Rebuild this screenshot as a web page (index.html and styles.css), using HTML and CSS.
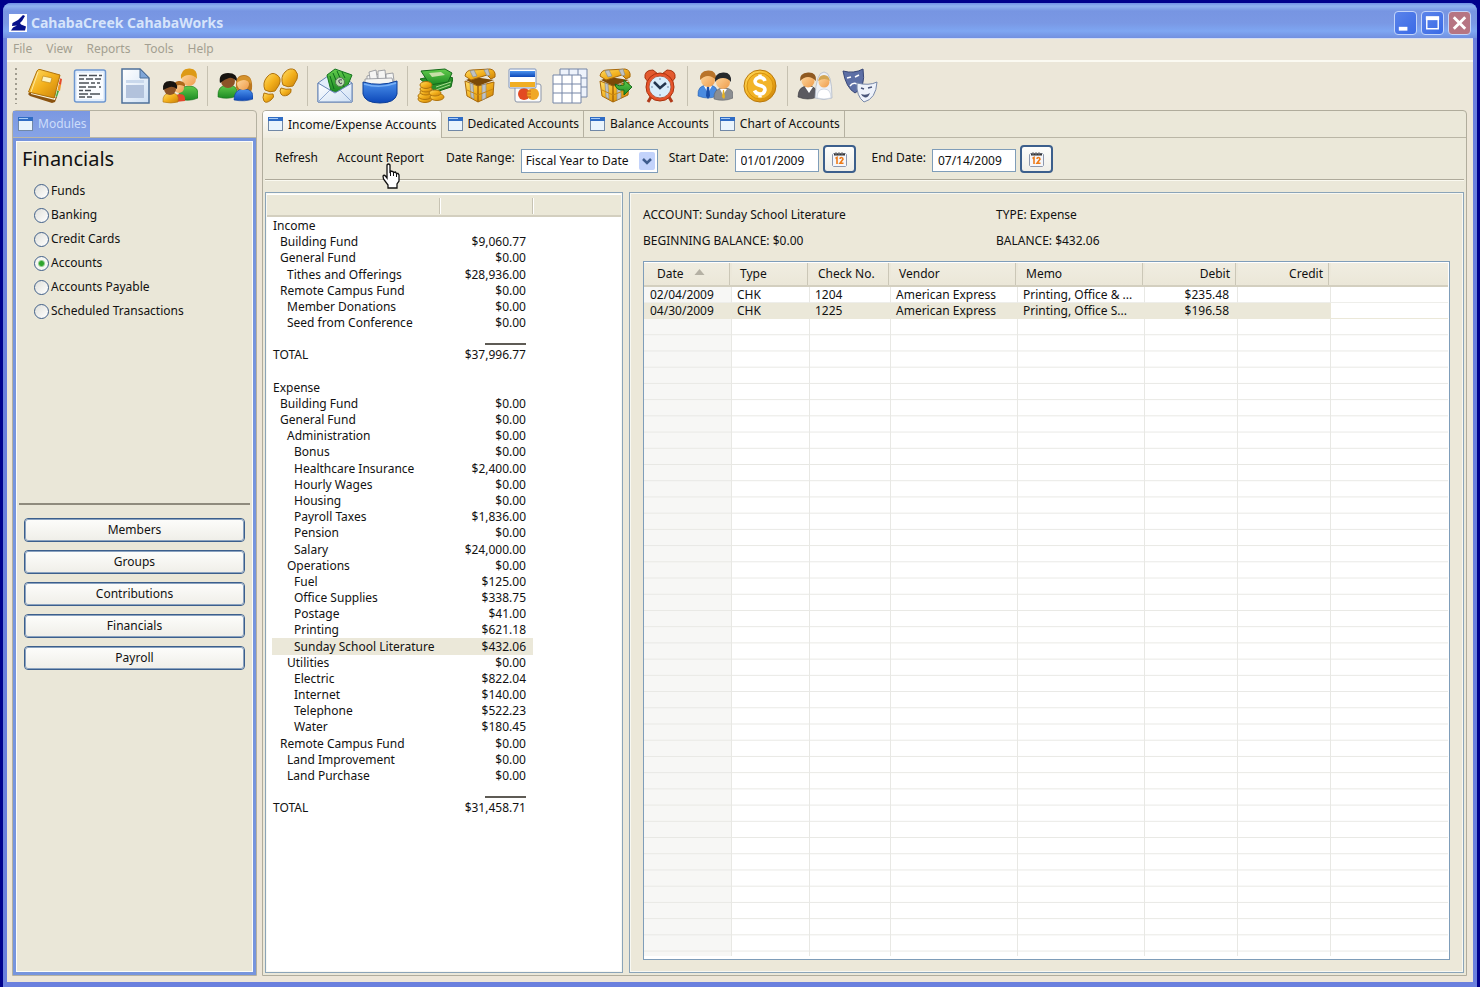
FILE: index.html
```html
<!DOCTYPE html>
<html lang="en">
<head>
<meta charset="utf-8">
<title>CahabaCreek CahabaWorks</title>
<link rel="stylesheet" href="styles.css">
</head>
<body>
<svg class="defs" aria-hidden="true">
  <defs>
    <linearGradient id="gold" x1="0" y1="0" x2="1" y2="1"><stop offset="0" stop-color="#ffdf6b"/><stop offset=".5" stop-color="#f3b01c"/><stop offset="1" stop-color="#c87f08"/></linearGradient>
    <linearGradient id="blue" x1="0" y1="0" x2="0" y2="1"><stop offset="0" stop-color="#4d93ee"/><stop offset="1" stop-color="#0c47b8"/></linearGradient>
    <linearGradient id="green" x1="0" y1="0" x2="0" y2="1"><stop offset="0" stop-color="#62cc4c"/><stop offset="1" stop-color="#1c8a23"/></linearGradient>
    <linearGradient id="skin" x1="0" y1="0" x2="1" y2="1"><stop offset="0" stop-color="#ffd9a0"/><stop offset="1" stop-color="#ee9b4a"/></linearGradient>
    <linearGradient id="paper" x1="0" y1="0" x2="1" y2="1"><stop offset="0" stop-color="#ffffff"/><stop offset="1" stop-color="#cfe0f4"/></linearGradient>
    <symbol id="app" viewBox="0 0 18 18"><path fill="#06108a" d="M14 1l2 1-3 5-2 2 1 1.500 5 2-1 4H2l2-3 4-2-5 .5.500-3L9 6z"/></symbol>
    <symbol id="win" viewBox="0 0 15 15"><rect x=".5" y=".5" width="14" height="13" fill="#e9f4fd" stroke="#7188a6"/><path fill="#2f6cc4" d="M0 0h15v4H0z"/><path fill="#a9cbf5" d="M1 1h9v1H1z"/></symbol>
    <symbol id="cal" viewBox="0 0 17 17"><path fill="#f4f6fb" stroke="#8d97ad" d="M1.500 3.500l1-1h12l1 1v11l-1 1h-12l-1-1z"/><path d="M3 3.500h11" stroke="#333" stroke-width="2"/><path d="M5 1v3M8 1v3M11 1v3" stroke="#777"/><path d="M4.500 7.500L6 6.500V13M9 8q0-1.500 1.500-1.500T12 8.200L9 12.300h3.500" fill="none" stroke="#ee7b18" stroke-width="1.600"/></symbol>
    <symbol id="chest" viewBox="0 0 36 36"><path fill="url(#gold)" stroke="#a8690b" d="M3 13l13 5v16L5 28zM16 18l16-4-1 13-15 7z"/><path fill="#7b4a08" d="M4 12l8-3 20 3-16 6z"/><path fill="url(#gold)" stroke="#a8690b" d="M3 8q1-6 7-6l18-1q6 1 5 8l-4 2-4-4-16 5z"/><path fill="#bfc2c4" stroke="#82868a" stroke-width=".6" d="M8 3l4-1 3 6-4 1zM22 2l4-1 2 6-3 1zM8 15l3 1 1 15-3-2zM20 17l4-1v14l-4 2z"/><path d="M5 22l11 5 15-6" fill="none" stroke="#c98712"/></symbol>

    <symbol id="i-book" viewBox="0 0 36 36"><path fill="#e44b2a" d="M32 10l3 1-1 6-3-1z"/><path fill="#f29a1f" d="M31 16l3 1-1 6-3-1z"/><path fill="#48a53a" d="M29 22l3 1-2 6-3-1z"/><path fill="#8a5310" d="M1 26l3-3 26 6-2 5-3 1L3 28z"/><path fill="#f8f3df" d="M4 24l24 6 4-20 1 1-5 21L4 26z"/><path fill="url(#gold)" stroke="#b0730d" d="M10 3q1-2 3-1.500L33 7 27 30 1.500 24z"/><path fill="#fdf3c4" stroke="#c28a1a" stroke-width=".7" d="M16 8l9 2-1.500 5-9-2z"/><path d="M11 4L4 24" stroke="#ffe9a1"/></symbol>
    <symbol id="i-list" viewBox="0 0 36 36"><rect x="2.500" y="2" width="31" height="32" rx="2" fill="#e3eefb" stroke="#6d96cf" stroke-width="1.500"/><rect x="5" y="5" width="26" height="26" fill="#fafcff"/><path d="M7 7.500h8M17 7.500h8M27 7.500h3M7 11h5M14 11h7M23 11h6M7 15h10M19 15h4M25 15h3M7 19h7M16 19h8M27 19h2M7 22.500h4M13 22.500h6M7 26h9M18 26h10M7 29h6M15 29h5" stroke="#4a4f57" stroke-width="1.500"/></symbol>
    <symbol id="i-doc" viewBox="0 0 36 36"><path fill="url(#paper)" stroke="#4e7099" stroke-width="1.500" d="M5 1h18l9 9v25H5z"/><path fill="#7fa6d8" stroke="#4e7099" d="M23 1v9h9z"/><path fill="#c9d8ec" d="M9 12h18v3H9z"/><path fill="#b2c2dc" d="M9 17h18v13H9z"/></symbol>
    <symbol id="i-family" viewBox="0 0 36 36"><path fill="url(#green)" stroke="#19701c" stroke-width=".6" d="M17 31q-1-13 10-13t9 12q-9 4-19 1z"/><circle cx="27" cy="11" r="7" fill="url(#skin)"/><path fill="#dd9a17" d="M19 11q-1-10 8-10.500T35 11q-3-4-8-4t-8 4z"/><path fill="#e2482c" d="M13 34q-1-8 5-8t5 7z"/><circle cx="17" cy="20" r="5" fill="url(#skin)"/><path fill="#b06a1c" d="M12 19q0-7 6-6t5 6q-5-4-11 0z"/><path fill="url(#gold)" stroke="#b0730d" stroke-width=".6" d="M1 34q-1-9 8-9t7 9q-7 2-15 0z"/><circle cx="8" cy="21" r="6" fill="#8c5327"/><path fill="#17130f" d="M1 22q-1-9 7-9t7 8q-4-3-7-2t-7 3z"/></symbol>
    <symbol id="i-couple" viewBox="0 0 36 36"><path fill="url(#green)" stroke="#19701c" stroke-width=".6" d="M1 29q-1-12 10-12t9 11q-9 4-19 1z"/><circle cx="11" cy="13" r="7" fill="#8c5327"/><path fill="#17130f" d="M3 15Q1 5 11 5t9 9q-4-5-8-4t-9 5z"/><path fill="#bb7820" d="M19 20q-1-13 8-13t8 14q-1 4-4 4h-9z"/><path fill="url(#blue)" stroke="#0d3e97" stroke-width=".6" d="M17 32q0-11 10-11t9 10q-8 3-19 1z"/><circle cx="26" cy="16" r="6" fill="url(#skin)"/><path fill="#d6932c" d="M19 15q2-8 9-7t6 8q-4-4-7-4t-8 3z"/></symbol>
    <symbol id="i-steps" viewBox="0 0 36 36"><g fill="url(#gold)" stroke="#b0730d"><path d="M3 22Q0 15 5 9t10-2q5 3 2 10l-4 6q-5 2-10-1z"/><path d="M2 25q5 2 9 1 2 3-2 6-5 4-7 1T2 25z"/><path d="M21 17q-3-8 2-13t10-2q4 4 2 9l-4 7q-5 2-10-1z"/><path d="M19 20q5 2 10 1 1 4-3 6-5 2-7-1t0-6z"/></g></symbol>
    <symbol id="i-mail" viewBox="0 0 36 36"><path fill="#e3edfa" stroke="#6684b5" d="M1 15L18 3l17 12v19H1z"/><path fill="url(#green)" stroke="#167420" d="M10 7l8-6 17 6-7 17-14-1z"/><path d="M13 8l4 13M16 5l5 12M20 3l7 16M25 4l3 6" stroke="#0f6a1c"/><circle cx="23" cy="14" r="4.500" fill="#bcd9b1" stroke="#557a54"/><path d="M25 12q-4-1-3 2t3 1" fill="none" stroke="#435"/><path fill="url(#paper)" stroke="#6684b5" d="M1 15l17 10 17-10v19H1z"/><path d="M1 34l12-12M35 34L23 22" stroke="#8fa9d2" fill="none"/></symbol>
    <symbol id="i-box" viewBox="0 0 36 36"><g fill="#f5f5f3" stroke="#8d8f95" stroke-width=".8"><path d="M5 8q10-4 26 1v10H5z"/><path d="M7 4l7-2 2 12-7 3zM16 3l7-1 1 11-8 2zM24 6l7-1 1 8-8 3z"/><path d="M3 11l27-1 2 8H3z"/></g><path fill="url(#blue)" stroke="#0d3f98" d="M1 14q17 5 34-1v13q-2 9-17 9T1 26z"/><path d="M2 16q16 5 32-1" fill="none" stroke="#79b0f5" stroke-width="1.500"/></symbol>
    <symbol id="i-cash" viewBox="0 0 36 36"><path fill="#2b8f2a" stroke="#156a1a" d="M3 11l22-5 11 4-2 9-15 5z"/><path fill="url(#green)" stroke="#156a1a" d="M4 3l24-2 7 4-4 9-18 3z"/><path fill="#c7dfa8" d="M12 5l12-1 4 3-13 2z"/><path d="M19 19l15-5M19 22l14-5" stroke="#a5d88d"/><g fill="url(#gold)" stroke="#b1740c"><ellipse cx="8" cy="31" rx="7" ry="3.500"/><ellipse cx="8" cy="28" rx="7" ry="3.500"/><ellipse cx="9" cy="24" rx="6" ry="3"/><ellipse cx="9" cy="21" rx="6" ry="3"/><ellipse cx="9" cy="17" rx="6" ry="3.500"/><ellipse cx="20" cy="29" rx="7" ry="3.500"/><ellipse cx="18" cy="25" rx="6" ry="3"/></g></symbol>
    <symbol id="i-cards" viewBox="0 0 36 36"><rect x="8" y="16" width="26" height="18" rx="2" fill="#fafafa" stroke="#8b95a8"/><circle cx="17" cy="26" r="6" fill="#e34a22"/><circle cx="26" cy="26" r="6" fill="#f0a726"/><path d="M19 23h5M19 26h5M19 29h5" stroke="#cf6418"/><rect x="2" y="1" width="27" height="19" rx="1" fill="#fff" stroke="#7c93bd"/><path fill="url(#blue)" d="M3 3h25v6H3z"/><path fill="#f0ae24" d="M3 14h25v5H3z"/></symbol>
    <symbol id="i-grid" viewBox="0 0 36 36"><path fill="#eef3fb" stroke="#7585a6" d="M8 1h27v28H8zM8 10h27M8 19h27M17 1v28M26 1v28"/><path fill="#fff" stroke="#7585a6" d="M1 7h28v28H1zM1 16h28M1 25h28M10 7v28M20 7v28"/></symbol>
    <symbol id="i-chest" viewBox="0 0 36 36"><use href="#chest"/></symbol>
    <symbol id="i-chestgo" viewBox="0 0 36 36"><use href="#chest"/><path fill="url(#green)" stroke="#156a1a" d="M18 16q4 3 9 1v-5l8 7-8 8v-5q-8 1-9-6z"/></symbol>
    <symbol id="i-clock" viewBox="0 0 36 36"><path d="M9 29l-3 5M27 29l3 5" stroke="#b03a1a" stroke-width="3"/><path fill="#e35a2f" stroke="#a8330f" d="M3 10q-1-8 8-8l5 4-9 9zM33 10q1-8-8-8l-5 4 9 9z"/><circle cx="18" cy="19" r="14" fill="#e9532a" stroke="#a8330f"/><circle cx="18" cy="19" r="11" fill="#d9edfb" stroke="#b65b3d"/><path d="M12 14l6 6 6-5" fill="none" stroke="#24364e" stroke-width="2.500"/><path d="M18 10v2M18 26v2M9 19h2M25 19h2" stroke="#6a87a8"/></symbol>
    <symbol id="i-business" viewBox="0 0 36 36"><path fill="#4a8be0" stroke="#265fae" stroke-width=".6" d="M1 28q-1-11 10-11t9 11q-9 4-19 0z"/><path fill="#fff" d="M7 18h8l-4 7z"/><path fill="#1b4fa8" d="M10 18h2l1 10-2 3-2-3z"/><circle cx="11" cy="12" r="7" fill="url(#skin)"/><path fill="#b9742a" d="M3 12Q2 3 11 2.500T19 12q-4-4-8-4t-8 4z"/><path fill="#8b8e92" stroke="#606366" stroke-width=".6" d="M17 31q-1-11 10-11t9 10q-9 4-19 1z"/><path fill="#fff" d="M23 21h7l-4 6z"/><path fill="#e6b223" d="M26 22h1l1 7-1 2-2-2z"/><circle cx="26" cy="14" r="7" fill="url(#skin)"/><path fill="#26292c" d="M18 14q-1-9 8-9.500T34 14q-3-4-8-4t-8 4z"/></symbol>
    <symbol id="i-coin" viewBox="0 0 36 36"><circle cx="18" cy="18" r="16" fill="url(#gold)" stroke="#b9780c"/><circle cx="18" cy="18" r="13" fill="#f2b429" stroke="#d7930f"/><path d="M23 13q-1-3.500-5-3.500t-5 3.500q0 3.500 5 4.500t5 4.500q-1 4-5 4t-5.500-3.500M18 6.500v4M18 26v3.500" fill="none" stroke="#fff" stroke-width="3.500"/></symbol>
    <symbol id="i-wedding" viewBox="0 0 36 36"><path fill="#5b5a60" stroke="#3d3c41" stroke-width=".6" d="M1 29q0-11 10-11t9 11q-9 4-19 0z"/><path fill="#fff" d="M8 19h8l-4 6z"/><circle cx="11" cy="13" r="6.500" fill="url(#skin)"/><path fill="#8f5a22" d="M3 13Q2 5 11 4.500T19 13q-4-4-8-4t-8 4z"/><path fill="#edf0f5" stroke="#a9b2c2" stroke-width=".7" d="M18 30Q19 4 27 4t8 26q-8 3-17 0z"/><circle cx="27" cy="14" r="5.500" fill="url(#skin)"/><path fill="#d3a552" d="M21 13q1-6 6-6t6 6q-5-4-12 0z"/><path fill="#fff" stroke="#b9c2d2" stroke-width=".6" d="M20 30q0-9 7-9t7 9q-7 2-14 0z"/></symbol>
    <symbol id="i-masks" viewBox="0 0 36 36"><path fill="#5d6fa5" stroke="#3a4877" d="M1 3q11 3 20-2 3 19-8 24Q4 20 1 3z"/><path d="M5 10l4-1M13 9l4-2M8 18q3-4 7-2" fill="none" stroke="#fff" stroke-width="1.500"/><path fill="#eef2fa" stroke="#7888a8" d="M15 15q12 3 20-1-1 17-13 20-8-6-7-19z"/><path d="M19 20l3 1M26 20l4-1" stroke="#4a567a" stroke-width="1.500"/><path d="M19 26q5 2 9-1-2 5-5 4.500-3-.5-4-3.500z" fill="#4a567a"/></symbol>
  </defs>
</svg>

<div class="window">
  <header class="titlebar">
    <span class="app-icon"><svg><use href="#app"/></svg></span>
    <h1 class="title">CahabaCreek CahabaWorks</h1>
    <div class="caption">
      <button class="cap" aria-label="Minimize"><svg viewBox="0 0 22 22"><path fill="#fff" d="M4 15h9v4H4z"/></svg></button>
      <button class="cap" aria-label="Maximize"><svg viewBox="0 0 22 22"><path fill="none" stroke="#fff" stroke-width="1.500" d="M5 5h12v12H5z"/><path fill="#fff" d="M4 4h14v4H4z"/></svg></button>
      <button class="cap close" aria-label="Close"><svg viewBox="0 0 22 22"><path stroke="#fff" stroke-width="3" d="M5 5l12 12M17 5L5 17"/></svg></button>
    </div>
  </header>

  <nav class="menubar" aria-label="Main menu">
    <button>File</button><button>View</button><button>Reports</button><button>Tools</button><button>Help</button>
  </nav>

  <div class="toolbar" role="toolbar" aria-label="Tools">
    <span class="grip"></span>
    <button aria-label="Directory"><svg><use href="#i-book"/></svg></button>
    <button aria-label="List"><svg><use href="#i-list"/></svg></button>
    <button aria-label="Document"><svg><use href="#i-doc"/></svg></button>
    <button aria-label="Families"><svg><use href="#i-family"/></svg></button>
    <span class="sep"></span>
    <button aria-label="Groups"><svg><use href="#i-couple"/></svg></button>
    <button aria-label="Visits"><svg><use href="#i-steps"/></svg></button>
    <span class="sep"></span>
    <button aria-label="Offerings"><svg><use href="#i-mail"/></svg></button>
    <button aria-label="Batches"><svg><use href="#i-box"/></svg></button>
    <span class="sep"></span>
    <button aria-label="Cash"><svg><use href="#i-cash"/></svg></button>
    <button aria-label="Funds"><svg><use href="#i-chest"/></svg></button>
    <button aria-label="Credit cards"><svg><use href="#i-cards"/></svg></button>
    <button aria-label="Ledger"><svg><use href="#i-grid"/></svg></button>
    <button aria-label="Transfer"><svg><use href="#i-chestgo"/></svg></button>
    <button aria-label="Scheduled"><svg><use href="#i-clock"/></svg></button>
    <span class="sep"></span>
    <button aria-label="Employees"><svg><use href="#i-business"/></svg></button>
    <button aria-label="Pay"><svg><use href="#i-coin"/></svg></button>
    <span class="sep"></span>
    <button aria-label="Weddings"><svg><use href="#i-wedding"/></svg></button>
    <button aria-label="Events"><svg><use href="#i-masks"/></svg></button>
  </div>

  <div class="workspace">
    <aside class="modules">
      <div class="tabs"><button class="module-tab"><svg><use href="#win"/></svg>Modules</button></div>
      <div class="module-body">
        <section class="choices">
          <h2>Financials</h2>
          <label><input type="radio" name="view">Funds</label>
          <label><input type="radio" name="view">Banking</label>
          <label><input type="radio" name="view">Credit Cards</label>
          <label><input type="radio" name="view" checked>Accounts</label>
          <label><input type="radio" name="view">Accounts Payable</label>
          <label><input type="radio" name="view">Scheduled Transactions</label>
        </section>
        <nav class="switcher" aria-label="Modules">
          <button>Members</button>
          <button>Groups</button>
          <button>Contributions</button>
          <button>Financials</button>
          <button>Payroll</button>
        </nav>
      </div>
    </aside>

    <main class="editor">
      <div class="tabs" role="tablist">
        <button class="tab active" role="tab" aria-selected="true"><svg><use href="#win"/></svg>Income/Expense Accounts</button>
        <button class="tab" role="tab"><svg><use href="#win"/></svg>Dedicated Accounts</button>
        <button class="tab" role="tab"><svg><use href="#win"/></svg>Balance Accounts</button>
        <button class="tab" role="tab"><svg><use href="#win"/></svg>Chart of Accounts</button>
      </div>

      <div class="filters">
        <button class="link">Refresh</button>
        <button class="link report">Account Report<svg class="pointer" viewBox="0 0 18 26"><path fill="#fff" stroke="#111" stroke-width="1.300" d="M5 2q1.500-2 3 0v7l1-1 2 .5.500 1 2-.5 1 1.500 1.500 0 1 1.500v6l-2 3v4H6v-3l-4.500-6-.5-3q1-1.500 2.500 0L5 15z"/><path d="M8.500 9v4M11.500 10v3M14.500 11v3" stroke="#111"/></svg></button>
        <div class="field range">
          <label for="range">Date Range:</label>
          <span class="combo"><select id="range"><option>Fiscal Year to Date</option></select><svg viewBox="0 0 16 18"><rect width="16" height="18" rx="2" fill="#c3d3fb"/><path d="M4 7l4 4 4-4" fill="none" stroke="#3f5c8e" stroke-width="2.500"/></svg></span>
        </div>
        <div class="field">
          <label for="start">Start Date:</label>
          <input id="start" type="text" value="01/01/2009">
          <button class="cal" aria-label="Pick start date"><svg><use href="#cal"/></svg></button>
        </div>
        <div class="field end">
          <label for="end">End Date:</label>
          <input id="end" type="text" value="07/14/2009">
          <button class="cal" aria-label="Pick end date"><svg><use href="#cal"/></svg></button>
        </div>
      </div>

      <div class="panes">
        <section class="pane tree-pane">
          <div class="tree-head"><span></span><span></span></div>
          <div class="tree-body">
          <table class="tree">
            <colgroup><col class="c-name"><col class="c-amount"></colgroup>
            <tbody>
            <tr><td>Income</td><td></td></tr>
            <tr><td class="l1">Building Fund</td><td>$9,060.77</td></tr>
            <tr><td class="l1">General Fund</td><td>$0.00</td></tr>
            <tr><td class="l2">Tithes and Offerings</td><td>$28,936.00</td></tr>
            <tr><td class="l1">Remote Campus Fund</td><td>$0.00</td></tr>
            <tr><td class="l2">Member Donations</td><td>$0.00</td></tr>
            <tr><td class="l2">Seed from Conference</td><td>$0.00</td></tr>
            <tr><td></td><td class="rule"></td></tr>
            <tr><td>TOTAL</td><td>$37,996.77</td></tr>
            <tr><td></td><td></td></tr>
            <tr><td>Expense</td><td></td></tr>
            <tr><td class="l1">Building Fund</td><td>$0.00</td></tr>
            <tr><td class="l1">General Fund</td><td>$0.00</td></tr>
            <tr><td class="l2">Administration</td><td>$0.00</td></tr>
            <tr><td class="l3">Bonus</td><td>$0.00</td></tr>
            <tr><td class="l3">Healthcare Insurance</td><td>$2,400.00</td></tr>
            <tr><td class="l3">Hourly Wages</td><td>$0.00</td></tr>
            <tr><td class="l3">Housing</td><td>$0.00</td></tr>
            <tr><td class="l3">Payroll Taxes</td><td>$1,836.00</td></tr>
            <tr><td class="l3">Pension</td><td>$0.00</td></tr>
            <tr><td class="l3">Salary</td><td>$24,000.00</td></tr>
            <tr><td class="l2">Operations</td><td>$0.00</td></tr>
            <tr><td class="l3">Fuel</td><td>$125.00</td></tr>
            <tr><td class="l3">Office Supplies</td><td>$338.75</td></tr>
            <tr><td class="l3">Postage</td><td>$41.00</td></tr>
            <tr><td class="l3">Printing</td><td>$621.18</td></tr>
            <tr class="selected"><td class="l3">Sunday School Literature</td><td>$432.06</td></tr>
            <tr><td class="l2">Utilities</td><td>$0.00</td></tr>
            <tr><td class="l3">Electric</td><td>$822.04</td></tr>
            <tr><td class="l3">Internet</td><td>$140.00</td></tr>
            <tr><td class="l3">Telephone</td><td>$522.23</td></tr>
            <tr><td class="l3">Water</td><td>$180.45</td></tr>
            <tr><td class="l1">Remote Campus Fund</td><td>$0.00</td></tr>
            <tr><td class="l2">Land Improvement</td><td>$0.00</td></tr>
            <tr><td class="l2">Land Purchase</td><td>$0.00</td></tr>
            <tr><td></td><td class="rule"></td></tr>
            <tr><td>TOTAL</td><td>$31,458.71</td></tr>
            </tbody>
          </table>
          </div>
        </section>

        <section class="pane detail">
          <div class="summary">
            <span>ACCOUNT: Sunday School Literature</span><span>TYPE: Expense</span>
            <span>BEGINNING BALANCE: $0.00</span><span>BALANCE: $432.06</span>
          </div>
          <div class="ledger-box">
            <table class="ledger">
              <colgroup><col class="w-date"><col class="w-type"><col class="w-check"><col class="w-text"><col class="w-text"><col class="w-money"><col class="w-money"><col></colgroup>
              <thead>
                <tr><th>Date <svg class="sort" viewBox="0 0 10 6"><path fill="#b5b1a4" d="M5 0l5 6H0z"/></svg></th><th>Type</th><th>Check No.</th><th>Vendor</th><th>Memo</th><th class="num">Debit</th><th class="num">Credit</th><th></th></tr>
              </thead>
              <tbody>
                <tr class="entry"><td>02/04/2009</td><td>CHK</td><td>1204</td><td>American Express</td><td>Printing, Office &amp; ...</td><td class="num">$235.48</td><td></td><td></td></tr>
                <tr class="entry selected"><td>04/30/2009</td><td>CHK</td><td>1225</td><td>American Express</td><td>Printing, Office S...</td><td class="num">$196.58</td><td></td><td></td></tr>
                <tr class="blank"><td></td><td></td><td></td><td></td><td></td><td></td><td></td><td></td></tr>
              </tbody>
            </table>
          </div>
        </section>
      </div>
    </main>
  </div>
</div>
</body>
</html>
```
FILE: styles.css
```css
* { box-sizing: border-box; }
html, body { height: 100%; }
body {
  margin: 0;
  padding: 3px 3px 0;
  background: #00018c;
  color: #111;
  font: 12px/16px "Noto Sans", "Open Sans", sans-serif;
  overflow: hidden;
}
button, input, select { font: inherit; color: inherit; margin: 0; }
button { padding: 0; border: 0; background: none; white-space: nowrap; }
svg { display: block; }
.defs { position: absolute; width: 0; height: 0; }

.window {
  display: flex;
  flex-direction: column;
  height: 100%;
  padding: 0 4px 5px;
  background: #6a80de;
  border-radius: 8px 8px 0 0;
}

.titlebar {
  display: flex;
  align-items: center;
  gap: 4px;
  height: 35px;
  flex: none;
  margin: 0 -4px;
  padding: 4px 6px 0;
  border-radius: 8px 8px 0 0;
  background: linear-gradient(#6f8fe4 0, #8fb4f0 3px, #7795e2 8px, #7a98e4 20px, #7ea6f2 28px, #7290e0 35px);
}
.app-icon { width: 18px; height: 18px; background: #fff; }
.app-icon svg { width: 18px; height: 18px; }
.title { flex: 1; margin: 0; font-size: 14px; line-height: 20px; color: #d6e4fb; }
.caption { display: flex; gap: 4px; }
.cap { width: 23px; height: 24px; border: 1px solid #c3d5fa; border-radius: 4px; background: linear-gradient(135deg, #5a83ea, #3a6ae6); }
.cap svg { width: 21px; height: 22px; }
.cap.close { background: #b67583; }

.menubar {
  display: flex;
  flex: none;
  gap: 14px;
  height: 24px;
  padding: 0 6px 2px;
  align-items: center;
  background: #ece7da;
  border-top: 1px solid #d5def3;
  border-bottom: 2px solid #fbfaf2;
  color: #a39f91;
}
.toolbar {
  display: flex;
  flex: none;
  align-items: center;
  gap: 9px;
  height: 48px;
  padding: 0 8px;
  background: #ece7d9;
}
.toolbar button, .toolbar svg { width: 36px; height: 36px; }
.grip { width: 3px; height: 36px; background: radial-gradient(circle at 1px 1px, #a19d90 1px, transparent 1px) 0 0 / 3px 5px; }
.sep { width: 1px; height: 40px; background: #c6c1b1; }

.workspace {
  display: flex;
  flex: 1;
  gap: 5px;
  min-height: 0;
  padding: 0 6px 6px 5px;
  background: #ede6d8;
}
.tabs { display: flex; flex: none; height: 27px; border-bottom: 1px solid #bab6a6; }

.modules {
  display: flex;
  flex-direction: column;
  width: 245px;
  flex: none;
  border: 1px solid #b5b1a1;
  border-radius: 4px 4px 0 0;
}
.module-tab {
  display: flex;
  align-items: center;
  gap: 5px;
  width: 77px;
  padding-left: 5px;
  background: linear-gradient(#7b98e2, #86a3e6);
  color: #ccdcfa;
}
.module-tab svg, .tab svg { width: 15px; height: 15px; }
.module-body {
  display: flex;
  flex-direction: column;
  flex: 1;
  border: 3px solid #7795dd;
  outline: 1px solid #fdfdf8;
  outline-offset: -4px;
  background: #eae7d8;
}
.choices { height: 364px; padding: 6px 6px 0; border-bottom: 2px solid #8f8b7d; margin: 0 3px; }
.choices h2 { margin: 0 0 8px -3px; font-size: 20px; line-height: 24px; font-weight: 400; }
.choices label { display: flex; align-items: center; gap: 2px; height: 24px; padding-left: 9px; }
.choices input {
  appearance: none;
  width: 15px;
  height: 15px;
  margin: 0;
  border: 1px solid #41608a;
  border-radius: 50%;
  background: linear-gradient(135deg, #e0e0da, #fff);
}
.choices input:checked { background: radial-gradient(circle, #2fa52c 0 2px, #f6f6f2 4px); }
.switcher { display: flex; flex-direction: column; gap: 8px; padding: 13px 8px; }
.switcher button, .cal {
  border: 2px solid #3c5f8c;
  border-radius: 4px;
  background: linear-gradient(#fdfdfb, #efeee8);
}
.switcher button { height: 24px; border-width: 1px; outline: 1px solid #8aa2bf; outline-offset: -2px; }

.editor {
  display: flex;
  flex-direction: column;
  flex: 1;
  min-width: 0;
  border: 1px solid #b0ac9c;
  border-radius: 4px 4px 0 0;
  background: #ebe8d9;
}
.tab {
  display: flex;
  align-items: center;
  gap: 5px;
  padding: 0 4px 0 6px;
  border-right: 1px solid #b5b1a1;
}
.tab.active { padding-left: 5px; margin-bottom: -1px; background: linear-gradient(#fff, #efecdf); border-radius: 3px 3px 0 0; }
.filters {
  display: flex;
  flex: none;
  align-items: center;
  height: 42px;
  margin: 0 2px;
  padding: 1px 10px 0;
  border-bottom: 1px solid #aeaa9b;
  box-shadow: 0 1px #faf9f0;
}
.link { margin: 0 19px 2px 0; }
.report { position: relative; margin-right: 22px; }
.pointer { position: absolute; left: 45px; top: 13px; width: 18px; height: 26px; }
.field { display: flex; align-items: center; gap: 4px; }
.field label { margin: 0 2px 2px 0; }
.field.range { margin-right: 11px; }
.field.end { margin-left: 16px; }
.field input { width: 84px; height: 23px; margin-top: 3px; padding: 0 5px; border: 1px solid #7f9db9; background: #fff; }
.cal { display: grid; place-items: center; width: 33px; height: 28px; }
.cal svg { width: 17px; height: 17px; }
.combo { position: relative; margin-top: 4px; }
.combo select { appearance: none; display: block; width: 137px; height: 24px; padding: 0 4px; border: 1px solid #7f9db9; border-radius: 0; background: #fff; }
.combo svg { position: absolute; right: 3px; top: 3px; width: 16px; height: 18px; pointer-events: none; }

.panes { display: flex; flex: 1; gap: 6px; min-height: 0; padding: 12px 2px 2px; }
.pane { display: flex; flex-direction: column; border: 1px solid #8ba4b8; box-shadow: inset 0 0 0 1px #f8f8f2; }
.tree-pane { flex: 0 0 358px; padding: 2px 1px; background: #fff; }
.tree-head { display: flex; flex: none; height: 22px; background: #ebe8d8; border-bottom: 2px solid #d3cfbf; }
.tree-head span { width: 93px; margin: 3px 0 1px; border-right: 1px solid #c7c3b3; box-shadow: 1px 0 #fff; }
.tree-head span:first-child { width: 173px; }
.tree-body { flex: 1; min-height: 0; padding: 1px 0 0 5px; }
.tree { width: 261px; height: 79.6%; table-layout: fixed; border-collapse: collapse; }
.tree td { height: 16px; padding: 0 1px; line-height: 16px; white-space: nowrap; }
.c-amount { width: 93px; }
.tree td:last-child { padding-right: 7px; text-align: right; }
.tree .l1 { padding-left: 8px; }
.tree .l2 { padding-left: 15px; }
.tree .l3 { padding-left: 22px; }
.rule::after { content: ""; display: block; width: 41px; height: 2px; margin: 9px 0 0 auto; background: #5e5b55; }
.selected td { background: #ebe8d9; }

.detail { flex: 1; min-width: 0; padding: 14px 13px 12px; background: #ece8d9; }
.summary { display: grid; flex: none; grid-template-columns: 353px 1fr; row-gap: 10px; padding-bottom: 12px; }
.ledger-box { flex: 1; min-height: 0; padding: 1px 1px 3px 0; border: 1px solid #7f9db9; background: #fff; }
.ledger { width: 100%; height: 100%; table-layout: fixed; border-collapse: separate; border-spacing: 0; }
.w-date { width: 88px; }
.w-type { width: 78px; }
.w-check { width: 81px; }
.w-text { width: 127px; }
.w-money { width: 93px; }
.ledger th {
  height: 24px;
  padding: 0 8px;
  background: linear-gradient(#f0ede1, #ebe7d8);
  border-bottom: 2px solid #d3cfbf;
  background-clip: padding-box;
  font-weight: 400;
  text-align: left;
  box-shadow: inset -2px 0 #ece8da, inset -3px 0 #cbc7b7;
}
.ledger th:first-child { padding-left: 13px; }
.ledger th:last-child { box-shadow: none; }
.ledger .num { text-align: right; padding-right: 8px; }
.sort { display: inline-block; width: 11px; height: 6px; margin-left: 7px; vertical-align: 3px; }
.entry td { height: 16px; padding: 0 5px; line-height: 15px; border-bottom: 1px solid #eeeeea; border-right: 1px solid #e8e8e4; white-space: nowrap; }
.entry td:first-child { padding-left: 6px; }
.ledger td:last-child { border-right: 0; }
.ledger td:first-child { background-color: #f7f7f5; }
.ledger .selected td { background-color: #ebe8d9; border-color: #ebe8d9; }
.ledger .selected td:last-child { background-color: #fff; }
.blank td {
  height: 100%;
  padding: 0;
  border-right: 1px solid #e8e8e4;
  background-image: linear-gradient(to top, #e8e8e4 1px, transparent 1px);
  background-size: 100% calc((100% - 4px) / 39);
}
```
